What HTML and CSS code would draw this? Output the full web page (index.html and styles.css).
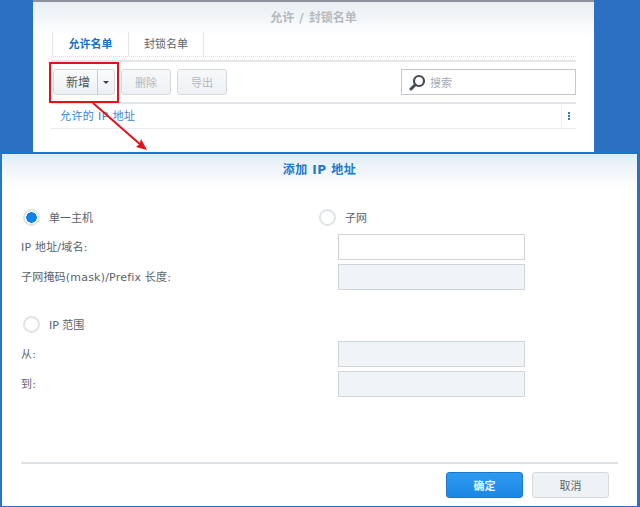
FILE: index.html
```html
<!DOCTYPE html>
<html lang="zh">
<head>
<meta charset="utf-8">
<title>添加 IP 地址</title>
<link rel="stylesheet" href="styles.css">
</head>
<body>
<div class="desk">
  <section class="win">
    <h2 class="win-title">允许 / 封锁名单</h2>
    <div class="tabs">
      <span class="tab active">允许名单</span>
      <span class="tab">封锁名单</span>
    </div>
    <div class="toolbar">
      <div class="split"><span class="split-main">新增</span><span class="split-caret"><i></i></span></div>
      <button class="btn disabled del">删除</button>
      <button class="btn disabled exp">导出</button>
      <div class="search">
        <svg width="17" height="17" viewBox="0 0 17 17"><circle cx="10" cy="7" r="5" fill="none" stroke="#444b52" stroke-width="2.2"/><path d="M6.2 10.8 2 15" stroke="#444b52" stroke-width="3" stroke-linecap="round"/></svg>
        <span>搜索</span>
      </div>
    </div>
    <div class="grid-head">
      <span class="col">允许的 IP 地址</span>
      <span class="col-menu"><i></i><i></i><i></i></span>
    </div>
  </section>

  <section class="dialog">
    <h2 class="dlg-title">添加 IP 地址</h2>
    <div class="dlg-body">
      <div class="cols">
        <div class="col-left">
          <label class="radio-row"><span class="radio on"></span>单一主机</label>
          <div class="lbl first">IP 地址/域名:</div>
          <div class="lbl">子网掩码(mask)/Prefix 长度:</div>
        </div>
        <div class="col-right">
          <label class="radio-row"><span class="radio"></span>子网</label>
          <div class="input"></div>
          <div class="input off"></div>
        </div>
      </div>
      <div class="cols range">
        <div class="col-left">
          <label class="radio-row"><span class="radio"></span>IP 范围</label>
          <div class="lbl first">从:</div>
          <div class="lbl">到:</div>
        </div>
        <div class="col-right">
          <div class="radio-row"></div>
          <div class="input off"></div>
          <div class="input off"></div>
        </div>
      </div>
    </div>
    <footer class="dlg-foot">
      <button class="fbtn ok">确定</button>
      <button class="fbtn cancel">取消</button>
    </footer>
  </section>

  <div class="mark"></div>
  <svg class="arrow" width="70" height="50" viewBox="0 0 70 50"><path d="M1 0 L50 43" stroke="#e3121a" stroke-width="2" fill="none"/><path d="M55 47 L44 44 L47.500 41 L49 36 Z" fill="#e3121a"/></svg>
</div>
</body>
</html>
```
FILE: styles.css
```css
* { box-sizing: border-box; }
html, body { margin: 0; padding: 0; }
body { font-family: "DejaVu Sans", "Noto Sans CJK SC", sans-serif; font-size: 11px; color: #555e66; }
.desk { position: relative; width: 640px; height: 507px; overflow: hidden; background: #2b70c1; }

.win { position: absolute; left: 33px; top: 0; width: 561px; height: 152px; border-top: 2px solid #8d939b; background: linear-gradient(#e9eef3 0, #fff 34px); padding: 0 18px; }
.win-title { margin: 0; height: 29px; font-size: 12px; word-spacing: 1px; line-height: 32px; font-weight: 700; text-align: center; color: #b4babf; }
.tabs { display: flex; height: 25px; margin-top: 1px; border-bottom: 1px dotted #d8dce0; padding-left: 1px; }
.tab { width: 76px; text-align: center; line-height: 25px; font-size: 11px; border-left: 1px solid #e3e6e9; color: #5b646c; }
.tab + .tab { border-right: 1px solid #e3e6e9; }
.tab.active { color: #1d6fc4; font-weight: 700; }
.toolbar { display: flex; align-items: center; height: 44px; margin-top: 3px; padding: 7px 0 7px 2px; border-top: 2px solid #e4e7ea; border-bottom: 2px solid #e4e7ea; }
.split { display: flex; width: 62px; height: 26px; border: 1px solid #d3d9de; border-radius: 3px; background: linear-gradient(#fafbfc, #eef1f4); }
.split-main { width: 43px; padding-left: 5px; text-align: center; line-height: 27px; font-size: 12px; color: #4c545b; }
.split-caret { flex: 1; border-left: 1px solid #c9ced3; display: flex; align-items: center; justify-content: center; }
.split-caret i { border: 3px solid transparent; border-top: 3px solid #3c4349; border-bottom: 0; }
.btn { height: 26px; width: 50px; padding: 0; margin-left: 6px; border: 1px solid #d6dbe0; border-radius: 3px; background: linear-gradient(#f7f8fa, #eef1f4); font: inherit; color: #b3b9bf; }
.search { margin-left: auto; width: 175px; height: 26px; border: 1px solid #c3c8cd; display: flex; align-items: center; gap: 4px; padding-left: 7px; color: #a6acb2; }
.grid-head { display: flex; align-items: center; height: 25px; border-bottom: 1px solid #e8ebee; }
.col { flex: 1; padding: 0 0 2px 9px; letter-spacing: .4px; color: #3f83c9; font-size: 11px; }
.col-menu { width: 15px; height: 100%; border-left: 1px solid #f0f2f4; display: flex; flex-direction: column; align-items: center; justify-content: center; gap: 1px; }
.col-menu i { width: 2px; height: 2px; background: #3476b8; }

.dialog { position: absolute; left: 0; top: 152px; width: 637px; height: 355px; border-top: 2px solid #1278d2; border-left: 2px solid #2b76c4; border-bottom: 1px solid #2b70c1; background: linear-gradient(#e3edf6 0, #fff 34px); display: flex; flex-direction: column; }
.dlg-title { margin: 0; height: 31px; text-align: center; font-size: 12px; letter-spacing: .5px; line-height: 33px; font-weight: 700; color: #2078d0; }
.dlg-body { flex: 1; padding: 19px 0 0 19px; }
.cols { display: flex; }
.col-left { width: 317px; }
.col-right { width: 187px; }
.range { margin-top: 18px; }
.radio-row { display: flex; align-items: center; gap: 9px; height: 26px; font-size: 11px; color: #5a6269; margin-left: 2px; }
.radio { width: 17px; height: 17px; border-radius: 50%; border: 2px solid #e1e4e7; background: #fff; flex: none; }
.radio.on { background: radial-gradient(circle, #0a82ea 0 5px, #fff 5.5px); }
.col-right .radio-row { margin-left: -19px; }
.lbl { height: 30px; line-height: 30px; font-size: 11px; letter-spacing: .2px; color: #5a6269; }
.lbl.first { margin-top: 3px; }
.input { height: 26px; margin-top: 4px; border: 1px solid #cfd5d9; background: #fff; }
.input.off { background: #f0f4f6; }
.dlg-foot { height: 44px; margin-left: 19px; width: 597px; border-top: 2px solid #dfe2e5; display: flex; justify-content: flex-end; gap: 9px; padding: 8px 9px 0 0; }
.fbtn { width: 77px; height: 26px; padding: 0; border-radius: 3px; font: inherit; font-size: 11px; }
.ok { background: linear-gradient(#2e9bf0, #1c87e4); border: 1px solid #1c78c8; color: #e8f3fc; font-weight: 700; }
.cancel { background: #eff2f4; border: 1px solid #d6dade; color: #5c646b; }

.mark { position: absolute; left: 49px; top: 62px; width: 70px; height: 41px; border: 2px solid #e3121a; }
.arrow { position: absolute; left: 92px; top: 103px; }
```
